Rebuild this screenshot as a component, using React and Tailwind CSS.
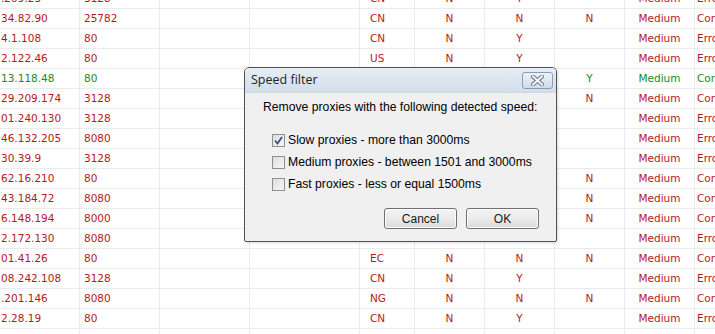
import React from 'react';

const red = 'text-[#b3191c]';
const green = 'text-[#218a21]';

// ip, port, country, anon, https, google, speed, status, ok
const rows = [
  ['.209.23', '3128', 'CN', 'N', 'Y', '', 'Medium', 'Error', false],
  ['34.82.90', '25782', 'CN', 'N', 'N', 'N', 'Medium', 'Connected', false],
  ['4.1.108', '80', 'CN', 'N', 'Y', '', 'Medium', 'Error', false],
  ['2.122.46', '80', 'US', 'N', 'Y', '', 'Medium', 'Error', false],
  ['13.118.48', '80', '', '', '', 'Y', 'Medium', 'Connected', true],
  ['29.209.174', '3128', '', '', '', 'N', 'Medium', 'Connected', false],
  ['01.240.130', '3128', '', '', '', '', 'Medium', 'Error', false],
  ['46.132.205', '8080', '', '', '', '', 'Medium', 'Error', false],
  ['30.39.9', '3128', '', '', '', '', 'Medium', 'Error', false],
  ['62.16.210', '80', '', '', '', 'N', 'Medium', 'Connected', false],
  ['43.184.72', '8080', '', '', '', 'N', 'Medium', 'Connected', false],
  ['6.148.194', '8000', '', '', '', 'N', 'Medium', 'Connected', false],
  ['2.172.130', '8080', '', '', '', '', 'Medium', 'Error', false],
  ['01.41.26', '80', 'EC', 'N', 'N', 'N', 'Medium', 'Connected', false],
  ['08.242.108', '3128', 'CN', 'N', 'Y', '', 'Medium', 'Error', false],
  ['.201.146', '8080', 'NG', 'N', 'N', 'N', 'Medium', 'Connected', false],
  ['2.28.19', '80', 'CN', 'N', 'Y', '', 'Medium', 'Error', false],
  ['', '', '', '', '', '', '', '', false],
];

const cell = 'h-full flex items-center border-r border-[#ebebeb] overflow-hidden whitespace-nowrap shrink-0';

const Row = ({ r }) => {
  const [ip, port, country, a, b, c, speed, status, ok] = r;
  const color = ok ? green : red;
  return (
    <div className={`flex h-[20px] border-b border-[#ebebeb] ${color}`}>
      <div className={`${cell} w-[80px] pl-[1px]`}>{ip}</div>
      <div className={`${cell} w-[80px] pl-[4px]`}>{port}</div>
      <div className={`${cell} w-[90px]`}></div>
      <div className={`${cell} w-[110px]`}></div>
      <div className={`${cell} w-[55px] pl-[10px]`}>{country}</div>
      <div className={`${cell} w-[70px] justify-center`}>{a}</div>
      <div className={`${cell} w-[70px] justify-center`}>{b}</div>
      <div className={`${cell} w-[70px] justify-center`}>{c}</div>
      <div className={`${cell} w-[70px] justify-center`}>{speed}</div>
      <div className={`${cell} w-[40px] pl-[2px] border-r-0`}>{status}</div>
    </div>
  );
};

const CloseIcon = () => (
  <svg width="13" height="11" viewBox="0 0 13 11">
    <path d="M2 1.5 L11 9.5 M11 1.5 L2 9.5" stroke="#6a788b" strokeWidth="4" strokeLinecap="square" />
    <path d="M2 1.5 L11 9.5 M11 1.5 L2 9.5" stroke="#f4f7fb" strokeWidth="2" strokeLinecap="square" />
  </svg>
);

const Check = ({ checked, label }) => (
  <label className="flex items-center h-[22px] gap-[3px]">
    <span className="w-[13px] h-[13px] border border-[#8e8f8f] bg-gradient-to-br from-[#dcdcdc] to-[#f8f8f8] flex items-center justify-center">
      {checked && (
        <svg width="9" height="9" viewBox="0 0 9 9">
          <path d="M1 4.5 L3.5 7.5 L8 1" stroke="#3c4f8c" strokeWidth="1.8" fill="none" />
        </svg>
      )}
    </span>
    <span>{label}</span>
  </label>
);

const Btn = ({ children }) => (
  <button className="w-[73px] h-[21px] rounded-[3px] border border-[#707070] bg-gradient-to-b from-[#f3f3f3] via-[#ebebeb] to-[#d9d9d9] text-[12px] text-[#1a1a1a] shadow-[inset_0_0_0_1px_#fcfcfc]">
    {children}
  </button>
);

export default function App() {
  return (
    <div className="relative w-[715px] h-[334px] overflow-hidden bg-white" style={{ fontFamily: '"DejaVu Sans", Verdana, sans-serif' }}>
      <div className="-mt-[11px] text-[10.5px]">
        {rows.map((r, i) => <Row key={i} r={r} />)}
      </div>

      <div className="absolute left-[244px] top-[67px] w-[313px] h-[175px] flex flex-col rounded-t-[5px] rounded-b-[2px] border border-[#4f5358] bg-[#f0f0f0] shadow-[1px_1px_3px_rgba(0,0,0,0.15)]" style={{ fontFamily: '"Liberation Sans", Arial, sans-serif' }}>
        <div className="h-[25px] flex items-center justify-between pl-[6px] pr-[3px] rounded-t-[4px] bg-gradient-to-b from-[#e6edf5] to-[#d3deea] border-b border-[#cfd8e2]">
          <span className="text-[12.5px] text-[#222]" style={{ fontFamily: '"Open Sans", "Noto Sans", sans-serif' }}>Speed filter</span>
          <span className="w-[31px] h-[17px] rounded-[3px] border border-[#8b9bb0] bg-gradient-to-b from-[#eef2f7] to-[#d1dbe7] flex items-center justify-center">
            <CloseIcon />
          </span>
        </div>
        <div className="flex flex-col text-[12.2px] text-black pt-[6px]">
          <div className="pl-[18px] h-[16px] leading-[16px]">Remove proxies with the following detected speed:</div>
          <div className="flex flex-col pl-[27px] mt-[14px]">
            <Check checked label="Slow proxies - more than 3000ms" />
            <Check label="Medium proxies - between 1501 and 3000ms" />
            <Check label="Fast proxies - less or equal 1500ms" />
          </div>
          <div className="flex justify-end gap-[9px] pr-[17px] mt-[13px]">
            <Btn>Cancel</Btn>
            <Btn>OK</Btn>
          </div>
        </div>
      </div>
    </div>
  );
}
